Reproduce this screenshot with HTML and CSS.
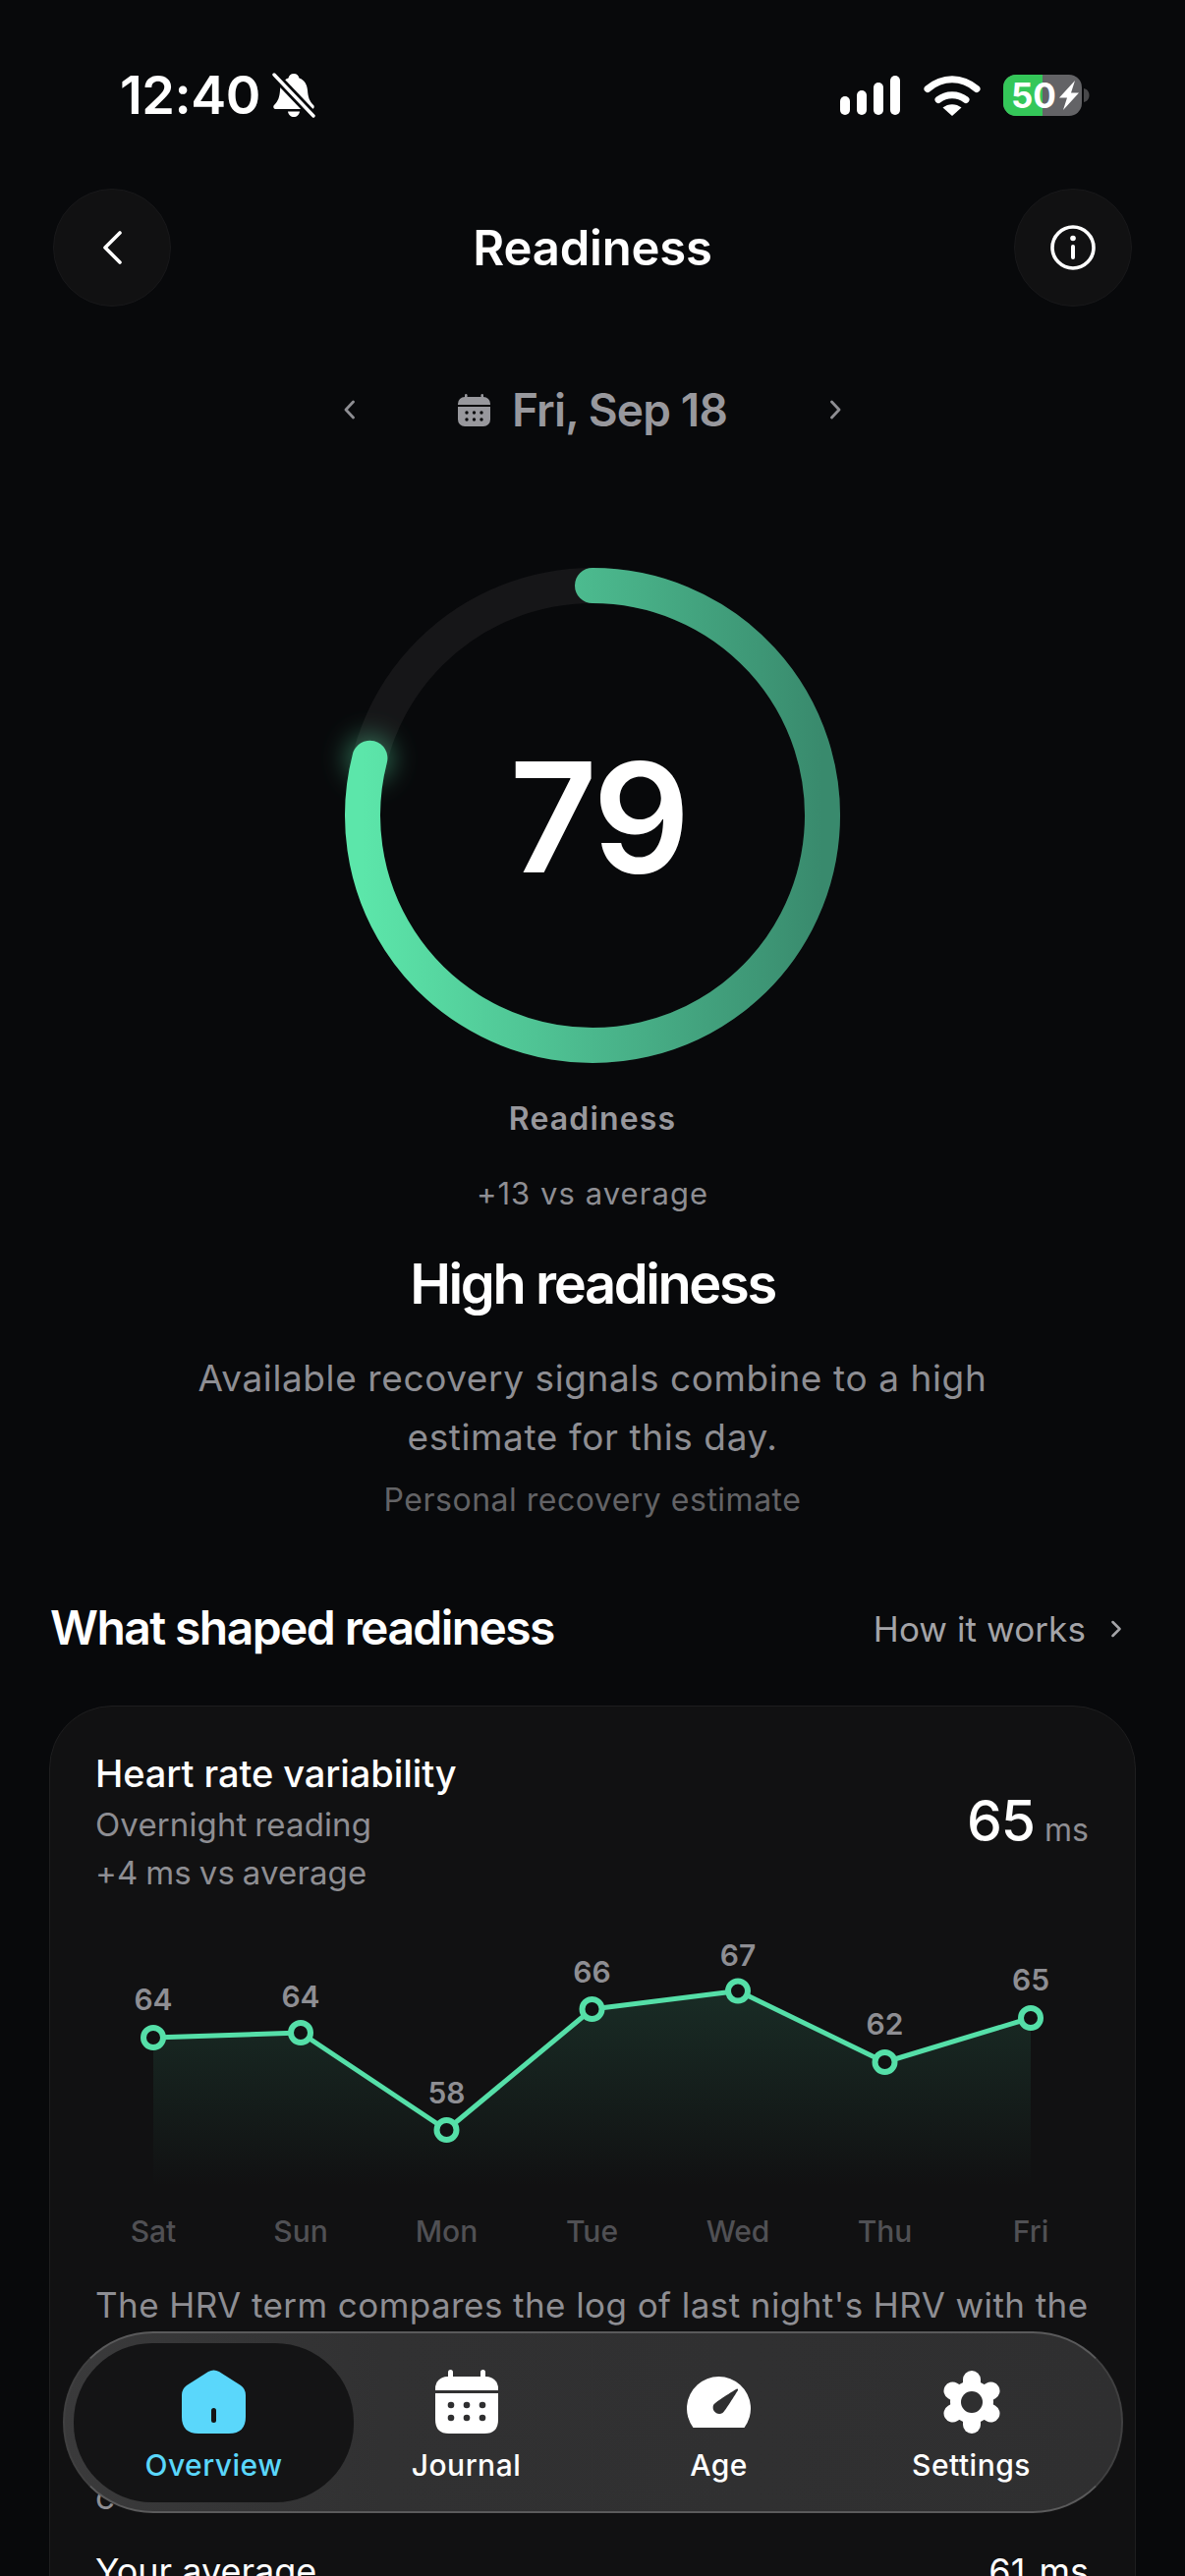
FILE: index.html
```html
<!DOCTYPE html>
<html lang="en">
<head>
<meta charset="utf-8">
<title>Readiness</title>
<link rel="stylesheet" href="styles.css">
</head>
<body>
<div class="screen">
  <div class="status">
    <div class="status-left">
      <span class="time">12:40</span>
      <svg class="bell" viewBox="0 0 44 46" width="44" height="46">
        <path fill="#fff" d="M22 1c3 0 5 2 5.500 4.500C33 7.500 35.500 12 36 18c.5 7 2 11 6 15 1.500 1.500.5 4-1.500 4H3.500C1.500 37 .5 34.500 2 33c4-4 5.500-8 6-15 .5-6 3-10.500 8.500-12.500C17 3 19 1 22 1z"/>
        <path fill="#fff" d="M16 39.500h12c-.5 3.500-3 5.500-6 5.500s-5.500-2-6-5.500z"/>
        <path stroke="#08090b" stroke-width="9" d="M2 2 42 44"/>
        <path stroke="#fff" stroke-width="3.400" stroke-linecap="round" d="M2 2 42 44"/>
      </svg>
    </div>
    <div class="status-right">
      <svg viewBox="0 0 62 40" width="62" height="40">
        <rect x="0" y="21" width="10" height="19" rx="5" fill="#fff"/>
        <rect x="17" y="15" width="10" height="25" rx="5" fill="#fff"/>
        <rect x="34" y="7" width="10" height="33" rx="5" fill="#fff"/>
        <rect x="51" y="0" width="10" height="40" rx="5" fill="#fff"/>
      </svg>
      <svg viewBox="0 0 58 42" width="58" height="42">
        <path fill="none" stroke="#fff" stroke-width="7" stroke-linecap="round" d="M4 14.500C19 1.500 39 1.500 54 14.500"/>
        <path fill="none" stroke="#fff" stroke-width="7" stroke-linecap="round" d="M15 25.500C23 19 35 19 43 25.500"/>
        <path fill="#fff" d="M19.500 33.500C25 29 33 29 38.500 33.500L29 42z"/>
      </svg>
      <svg viewBox="0 0 88 42" width="88" height="42">
        <rect x="0" y="0" width="80" height="42" rx="13" fill="#636366"/>
        <path d="M13 0H40V42H13A13 13 0 0 1 0 29V13A13 13 0 0 1 13 0z" fill="#34c759"/>
        <path d="M82 14c4 1 5.500 4 5.500 7s-1.500 6-5.500 7z" fill="#48484a"/>
        <text x="8" y="34" class="batt-text">50</text>
        <path d="M73 6 57 23.500h8L61 36 77 18.500h-8z" fill="#fff"/>
      </svg>
    </div>
  </div>

  <div class="header">
    <div class="round-btn">
      <svg viewBox="0 0 20 34" width="20" height="34"><path d="M18 2 3 17l15 15" fill="none" stroke="#fff" stroke-width="3.600" stroke-linecap="round" stroke-linejoin="round"/></svg>
    </div>
    <div class="title">Readiness</div>
    <div class="round-btn">
      <svg viewBox="0 0 46 46" width="46" height="46">
        <circle cx="23" cy="23" r="21" fill="none" stroke="#fff" stroke-width="3.600"/>
        <circle cx="23" cy="13.500" r="2.800" fill="#fff"/>
        <rect x="21" y="20" width="4" height="15" rx="2" fill="#fff"/>
      </svg>
    </div>
  </div>

  <div class="datebar">
    <svg viewBox="0 0 11 20" width="11" height="20"><path d="M9.500 2 2 10l7.500 8" fill="none" stroke="#8e8e93" stroke-width="2.800" stroke-linecap="round" stroke-linejoin="round"/></svg>
    <div class="date-center">
      <svg viewBox="0 0 33 33" width="33" height="33">
        <rect x="7" y="0" width="2.500" height="5" rx="1.200" fill="#98989d"/>
        <rect x="23.500" y="0" width="2.500" height="5" rx="1.200" fill="#98989d"/>
        <path d="M7 3h19a7 7 0 0 1 7 7v1H0v-1a7 7 0 0 1 7-7z" fill="#98989d"/>
        <path d="M0 13h33v13a7 7 0 0 1-7 7H7a7 7 0 0 1-7-7z" fill="#98989d"/>
        <g fill="#08090b"><circle cx="9" cy="19" r="1.700"/><circle cx="16.500" cy="19" r="1.700"/><circle cx="24" cy="19" r="1.700"/><circle cx="9" cy="26" r="1.700"/><circle cx="16.500" cy="26" r="1.700"/><circle cx="24" cy="26" r="1.700"/></g>
      </svg>
      <span class="date-text">Fri, Sep 18</span>
    </div>
    <svg viewBox="0 0 11 20" width="11" height="20"><path d="M1.500 2 9 10l-7.500 8" fill="none" stroke="#8e8e93" stroke-width="2.800" stroke-linecap="round" stroke-linejoin="round"/></svg>
  </div>

  <div class="ring-wrap">
    <svg class="ring" viewBox="320 550 566 560" width="566" height="560">
      <defs>
        <linearGradient id="ringGrad" gradientUnits="userSpaceOnUse" x1="369" y1="830" x2="837" y2="830">
          <stop offset="0" stop-color="#5ce6aa"/>
          <stop offset="0.5" stop-color="#4bb88d"/>
          <stop offset="1" stop-color="#398a6d"/>
        </linearGradient>
        <filter id="glow" x="-100%" y="-100%" width="300%" height="300%"><feGaussianBlur stdDeviation="13"/></filter>
      </defs>
      <circle cx="603" cy="830" r="234" fill="none" stroke="#161618" stroke-width="36"/>
      <circle cx="376" cy="772" r="24" fill="#5ce6aa" opacity="0.42" filter="url(#glow)"/>
      <path d="M603 596A234 234 0 1 1 376.400 771.700" fill="none" stroke="url(#ringGrad)" stroke-width="36" stroke-linecap="round"/>
    </svg>
    <div class="score">79</div>
  </div>

  <div class="ring-label">Readiness</div>
  <div class="delta">+13 vs average</div>
  <h1 class="headline">High readiness</h1>
  <p class="summary">Available recovery signals combine to a high<br>estimate for this day.</p>
  <div class="note">Personal recovery estimate</div>

  <div class="section-head">
    <h2 class="section-title">What shaped readiness</h2>
    <div class="how">
      <span>How it works</span>
      <svg viewBox="0 0 10 18" width="10" height="18"><path d="M1.500 2 8.500 9l-7 7" fill="none" stroke="#a4a4a8" stroke-width="2.500" stroke-linecap="round" stroke-linejoin="round"/></svg>
    </div>
  </div>

  <div class="card">
    <div class="card-head">
      <div>
        <div class="metric-name">Heart rate variability</div>
        <div class="metric-sub">Overnight reading</div>
        <div class="metric-sub">+4 ms vs average</div>
      </div>
      <div class="metric-value"><span class="big">65</span><span class="unit">ms</span></div>
    </div>

    <svg class="chart" viewBox="97 1960 1011 340" width="1011" height="340">
      <defs>
        <linearGradient id="areaGrad" x1="0" y1="0" x2="0" y2="1">
          <stop offset="0" stop-color="#4fe0a8" stop-opacity="0.13"/>
          <stop offset="1" stop-color="#4fe0a8" stop-opacity="0"/>
        </linearGradient>
      </defs>
      <path d="M156 2074 306 2069 454.500 2168 602.500 2045 751 2026.500 900.500 2099 1049 2054V2226H156z" fill="url(#areaGrad)"/>
      <path d="M156 2074 306 2069 454.500 2168 602.500 2045 751 2026.500 900.500 2099 1049 2054" fill="none" stroke="#55dfa8" stroke-width="5" stroke-linejoin="round"/>
      <g fill="#111112" stroke="#55dfa8" stroke-width="6">
        <circle cx="156" cy="2074" r="10"/><circle cx="306" cy="2069" r="10"/><circle cx="454.500" cy="2168" r="10"/><circle cx="602.500" cy="2045" r="10"/><circle cx="751" cy="2026.500" r="10"/><circle cx="900.500" cy="2099" r="10"/><circle cx="1049" cy="2054" r="10"/>
      </g>
      <g class="val">
        <text x="156" y="2046">64</text><text x="306" y="2043">64</text><text x="454.500" y="2141">58</text><text x="602.500" y="2018">66</text><text x="751" y="2001">67</text><text x="900.500" y="2071">62</text><text x="1049" y="2026">65</text>
      </g>
      <g class="day">
        <text x="156" y="2282">Sat</text><text x="306" y="2282">Sun</text><text x="454.500" y="2282">Mon</text><text x="602.500" y="2282">Tue</text><text x="751" y="2282">Wed</text><text x="900.500" y="2282">Thu</text><text x="1049" y="2282">Fri</text>
      </g>
    </svg>

    <p class="body-text">The HRV term compares the log of last night's HRV with the<br>baseline of your recent nights, so a small change in<br>either direction moves the estimate.</p>
    <p class="body-text body-second">c</p>
    <div class="stat-row"><span>Your average</span><span class="stat-val">61 ms</span></div>
  </div>

  <nav class="nav">
    <div class="nav-item active">
      <svg viewBox="0 0 65 66" width="65" height="66">
        <path fill="#5ad7fb" d="M27 2Q32.500-1 38 2L60 16Q65 19.500 65 26V48Q65 65 48 65H17Q0 65 0 48V26Q0 19.500 5 16Z"/>
        <rect x="30" y="39" width="5" height="15" rx="2.500" fill="#141415"/>
      </svg>
      <span>Overview</span>
    </div>
    <div class="nav-item">
      <svg viewBox="0 0 64 66" width="64" height="66">
        <rect x="13" y="0" width="5" height="10" rx="2.500" fill="#fff"/>
        <rect x="46" y="0" width="5" height="10" rx="2.500" fill="#fff"/>
        <path fill="#fff" d="M12 7H52A12 12 0 0 1 64 19V21H0V19A12 12 0 0 1 12 7z"/>
        <path fill="#fff" d="M0 24H64V51Q64 65 50 65H14Q0 65 0 51z"/>
        <g fill="#2f2f30"><circle cx="16" cy="36" r="3.300"/><circle cx="32" cy="36" r="3.300"/><circle cx="48" cy="36" r="3.300"/><circle cx="16" cy="49" r="3.300"/><circle cx="32" cy="49" r="3.300"/><circle cx="48" cy="49" r="3.300"/></g>
      </svg>
      <span>Journal</span>
    </div>
    <div class="nav-item">
      <svg viewBox="0 0 65 66" width="65" height="66">
        <path fill="#fff" d="M6.500 59A32.500 32.500 0 1 1 58.500 59z"/>
        <path fill="#2f2f30" d="M27 36C25 42 31 47 36.500 44 39 42.500 50 24 52 21 52.500 19.500 51 19 50 20 47 22 30 32 27 36z"/>
      </svg>
      <span>Age</span>
    </div>
    <div class="nav-item">
      <svg viewBox="0 0 62 66" width="62" height="66">
        <circle cx="31" cy="33" r="22" fill="#fff"/>
        <g stroke="#fff" stroke-width="18" stroke-linecap="round">
          <path d="M31 33V10"/><path d="M31 33V56"/><path d="M31 33 11.500 21.500"/><path d="M31 33 50.500 21.500"/><path d="M31 33 11.500 44.500"/><path d="M31 33 50.500 44.500"/>
        </g>
        <circle cx="31" cy="33" r="11" fill="#2f2f30"/>
      </svg>
      <span>Settings</span>
    </div>
  </nav>
</div>
</body>
</html>
```

FILE: styles.css
```css
* { box-sizing: border-box; }
html, body { margin: 0; padding: 0; background: #08090b; }
body { font-family: "Inter", "Noto Sans", sans-serif; color: #fff; }
svg { display: block; flex: none; }
h1, h2, p { margin: 0; font-weight: inherit; }

.screen { position: relative; width: 1206px; height: 2622px; overflow: hidden; }

.status { height: 192px; padding: 74px 97px 0 122px; display: flex; justify-content: space-between; align-items: flex-start; }
.status-left { display: flex; align-items: center; gap: 12px; height: 46px; }
.time { font-size: 54px; font-weight: 600; line-height: 46px; letter-spacing: -0.5px; }
.status-right { display: flex; align-items: center; gap: 23px; height: 46px; }
.batt-text { font-family: "Inter", sans-serif; font-size: 35px; font-weight: 700; fill: #fff; }

.header { height: 120px; margin: 0 54px; display: flex; justify-content: space-between; align-items: center; }
.round-btn { width: 120px; height: 120px; border-radius: 50%; background: #111112; border: 1px solid #18181a; display: flex; align-items: center; justify-content: center; }
.title { font-size: 49px; font-weight: 600; letter-spacing: -0.2px; }

.datebar { width: 506px; height: 60px; margin: 75px auto 0; display: flex; justify-content: space-between; align-items: center; }
.date-center { display: flex; align-items: center; gap: 22px; }
.date-text { font-size: 46px; font-weight: 600; color: #98989d; letter-spacing: -0.85px; }

.ring-wrap { height: 560px; margin-top: 103px; display: grid; justify-items: center; align-items: center; }
.ring { grid-area: 1 / 1; }
.score { grid-area: 1 / 1; font-size: 155px; font-weight: 600; letter-spacing: -3px; line-height: 1; padding: 3px 0 0 12px; }

.ring-label { margin-top: 9px; height: 40px; line-height: 40px; text-align: center; font-size: 32px; font-weight: 600; color: #98989d; letter-spacing: 1.15px; }
.delta { margin-top: 36px; height: 40px; line-height: 40px; text-align: center; font-size: 31px; color: #8e8e93; letter-spacing: 1.05px; }
.headline { margin-top: 37px; height: 70px; line-height: 70px; text-align: center; font-size: 56px; font-weight: 600; letter-spacing: -2.4px; }
.summary { margin-top: 31px; line-height: 60px; text-align: center; font-size: 37px; color: #8e8e93; letter-spacing: 0.6px; }
.note { margin-top: 14px; height: 40px; line-height: 40px; text-align: center; font-size: 32px; color: #636366; letter-spacing: 0.5px; }

.section-head { margin: 79px 50px 0 51px; height: 60px; display: flex; justify-content: space-between; align-items: center; }
.section-title { font-size: 48px; font-weight: 600; letter-spacing: -1.58px; }
.how { display: flex; align-items: center; gap: 26px; padding: 4px 15px 0 0; font-size: 35px; color: #a4a4a8; letter-spacing: 0.1px; }

.card { margin: 50px 50px 0 50px; height: 1000px; padding: 44px 47px 0 46px; background: #111112; border: 1px solid #1e1e1f; border-radius: 64px; }
.card-head { display: flex; justify-content: space-between; align-items: center; }
.metric-name { height: 52px; line-height: 48px; font-size: 38px; font-weight: 500; letter-spacing: -0.08px; }
.metric-sub { height: 49px; line-height: 49px; font-size: 33px; color: #8e8e93; letter-spacing: 0.12px; word-spacing: -1.5px; }
.metric-value { display: flex; align-items: baseline; gap: 10px; padding-bottom: 5px; }
.big { font-size: 57px; font-weight: 500; letter-spacing: -1px; }
.unit { font-size: 32px; color: #8e8e93; }

.chart { margin-top: 29px; }
.val text { font-family: "Inter", sans-serif; font-size: 30px; font-weight: 600; fill: #8e8e93; text-anchor: middle; }
.day text { font-family: "Inter", sans-serif; font-size: 30px; font-weight: 500; fill: #505054; text-anchor: middle; }

.body-text { margin-top: 16px; line-height: 60px; font-size: 35px; color: #8e8e93; letter-spacing: 0.43px; white-space: nowrap; }
.body-second { margin-top: 15px; }
.stat-row { margin-top: 16px; display: flex; justify-content: space-between; height: 60px; line-height: 60px; font-size: 36px; color: #fff; }
.stat-val { word-spacing: 4px; }

.nav { position: absolute; z-index: 10; left: 64px; top: 2373px; width: 1079px; height: 185px; padding: 10px 0 9px 23px; display: grid; grid-template-columns: repeat(4, 257px); border: 2px solid; border-color: #5a5a5b #404041; border-radius: 92px; background: linear-gradient(90deg, #3a3a3b 0%, #313132 30%, #2f2f30 100%); }
.nav-item { display: flex; flex-direction: column; align-items: center; padding-top: 27px; font-size: 30px; font-weight: 500; color: #fff; letter-spacing: 0.5px; }
.nav-item span { margin-top: 11px; line-height: 40px; }
.nav-item.active { margin: 0 -14px; color: #5ad7fb; background: #141415; border-radius: 80px; }
```
